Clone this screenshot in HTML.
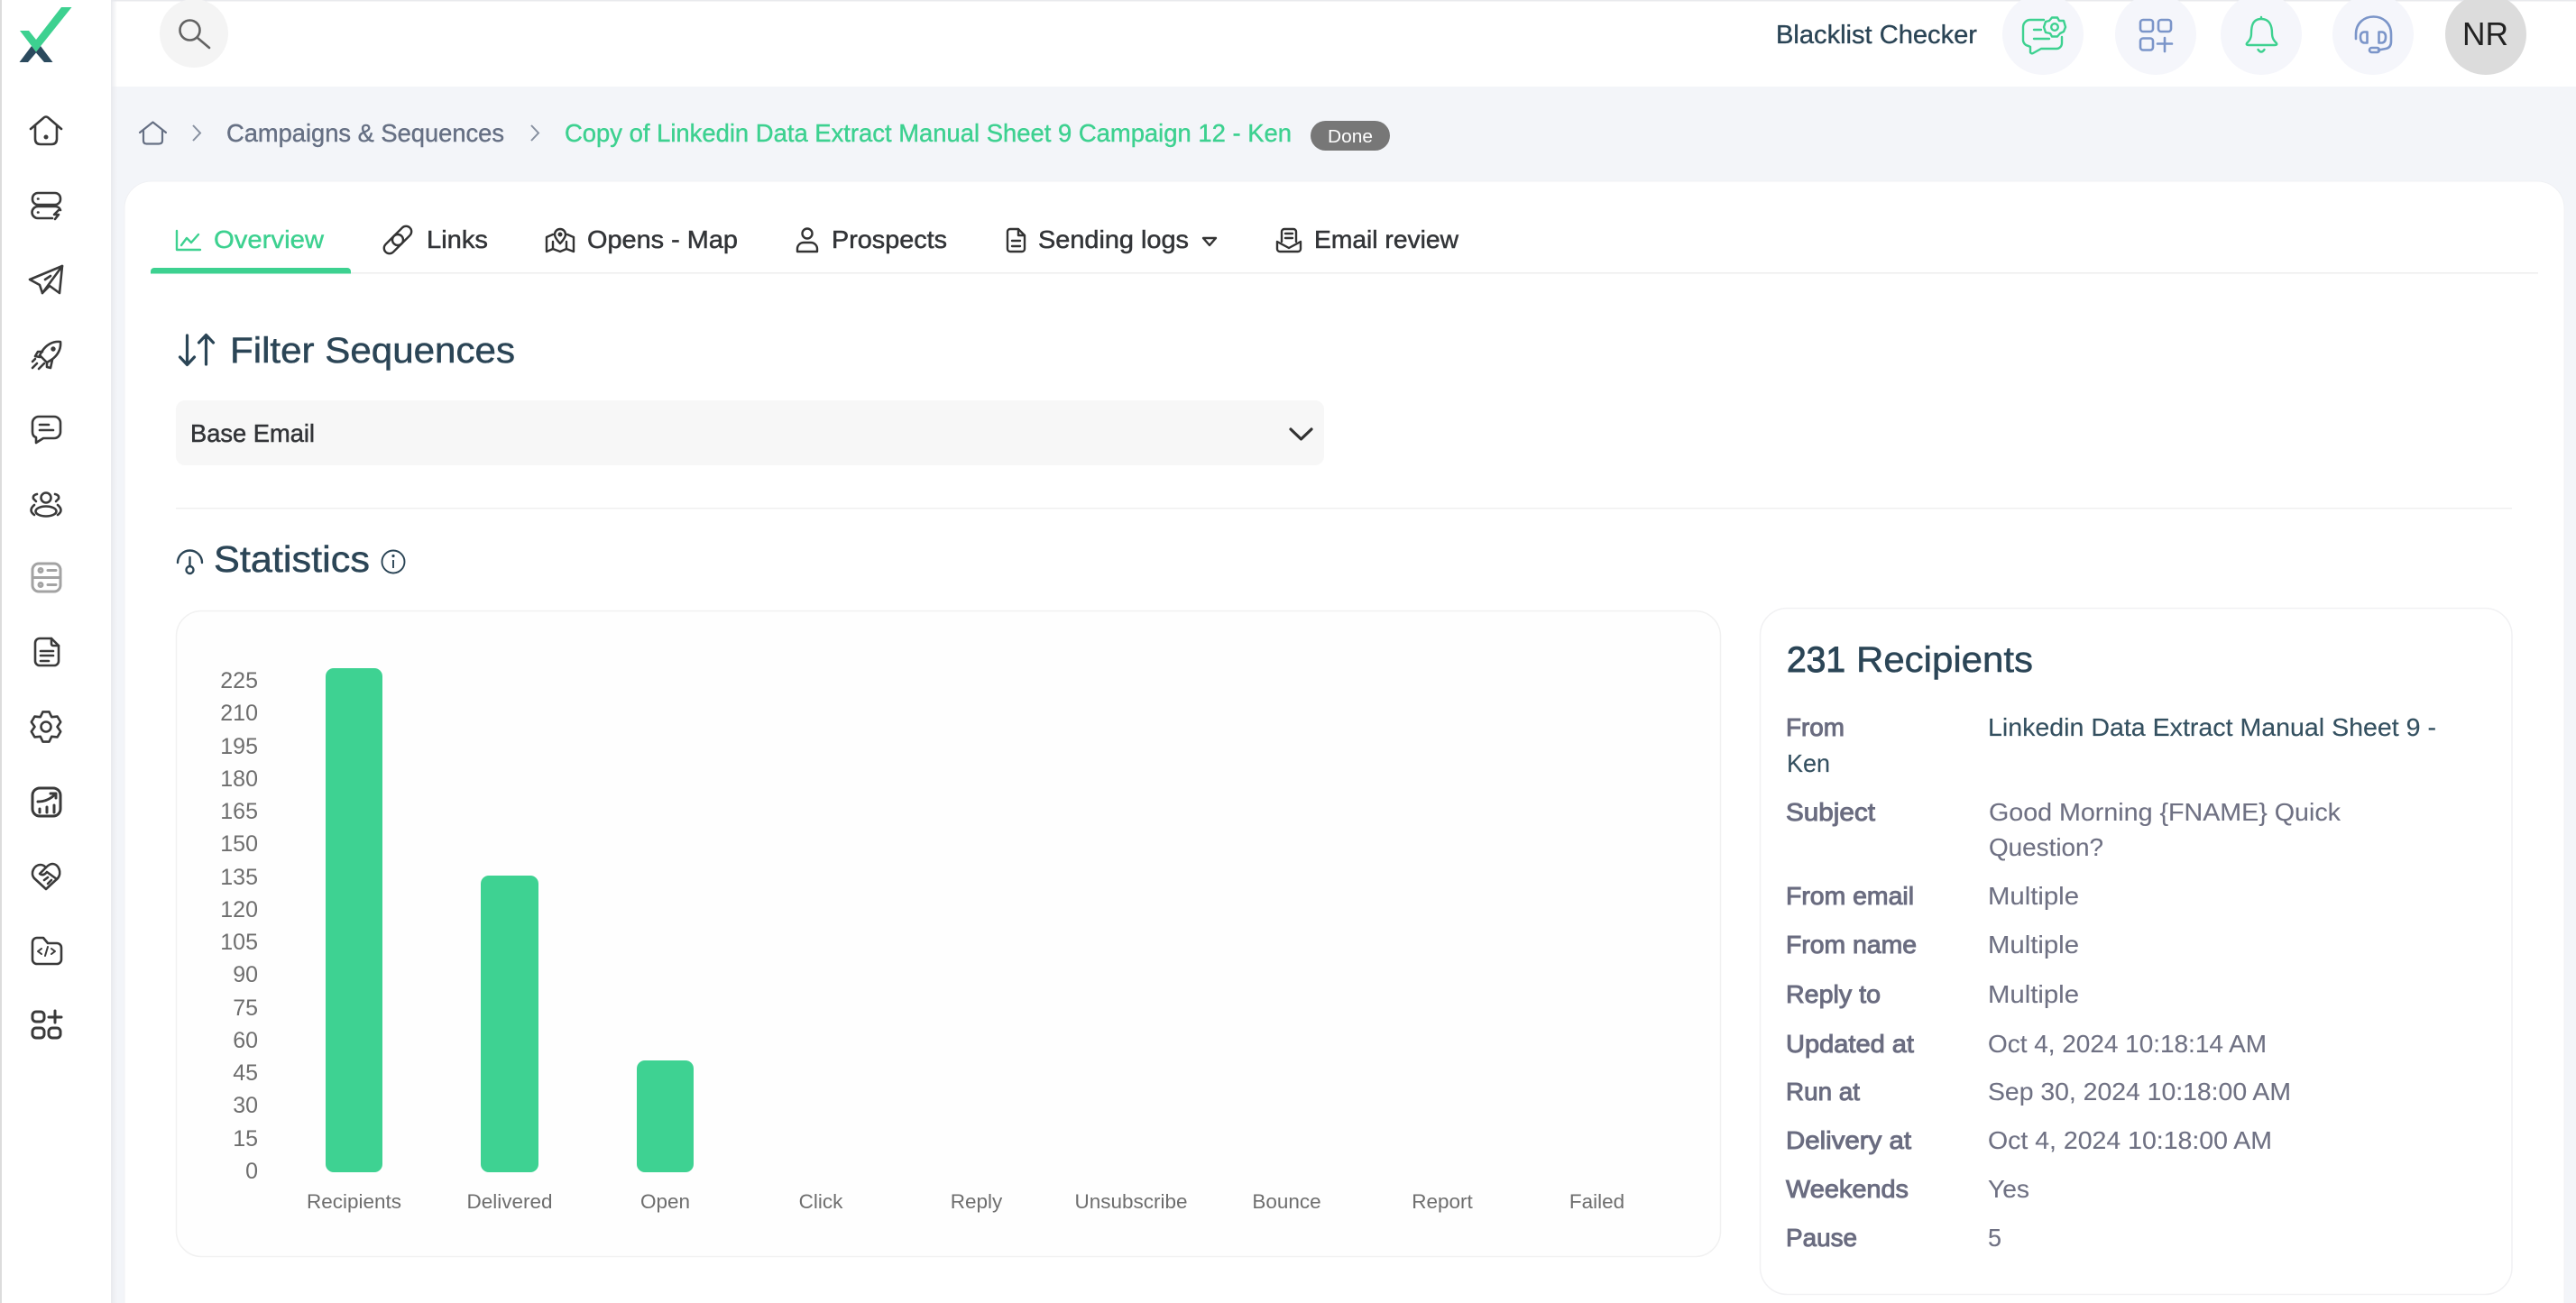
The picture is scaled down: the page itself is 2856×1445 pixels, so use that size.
<!DOCTYPE html>
<html lang="en">
<head>
<meta charset="utf-8">
<title>Campaign Overview</title>
<style>
html,body{margin:0;padding:0;width:2856px;height:1445px;overflow:hidden;background:#f3f5f9}
svg{display:block}
text{font-family:"Liberation Sans",Arial,sans-serif}
.t{font-size:27.5px;fill:#333538;stroke:#333538;stroke-width:.5px}
.crumb{font-size:27.5px;fill:#667084;stroke:#667084;stroke-width:.4px}
.lab{font-size:27.5px;fill:#6a6c80;stroke:#6a6c80;stroke-width:.95px}
.val{font-size:27.5px;fill:#6f7183;stroke:#6f7183;stroke-width:.12px}
.dark{font-size:27.5px;fill:#345060;stroke:#345060;stroke-width:.15px}
.h{font-size:39.5px;fill:#2b4556;stroke:#2b4556;stroke-width:.5px}
.y{font-size:25px;fill:#6e6e6e;text-anchor:end}
.x{font-size:22.5px;fill:#6e6e6e;text-anchor:middle}
.ic{fill:none;stroke:#3a3a3a;stroke-width:2.6;stroke-linecap:round;stroke-linejoin:round}
.tab{fill:none;stroke:#333;stroke-width:2.4;stroke-linecap:round;stroke-linejoin:round}
.g{fill:none;stroke:#3dd190;stroke-width:2.4;stroke-linecap:round;stroke-linejoin:round}
.b{fill:none;stroke:#7b95c9;stroke-width:2.6;stroke-linecap:round;stroke-linejoin:round}
</style>
</head>
<body>
<svg width="2856" height="1445" viewBox="0 0 2856 1445" xmlns="http://www.w3.org/2000/svg">
<defs>
<linearGradient id="sh" x1="0" x2="1" y1="0" y2="0"><stop offset="0" stop-color="#e9eaee"/><stop offset="1" stop-color="#e9eaee" stop-opacity="0"/></linearGradient>
</defs>
<rect width="2856" height="1445" fill="#f3f5f9"/>
<!-- header -->
<rect x="122" y="0" width="2734" height="96" fill="#fff"/>
<rect x="0" y="0" width="2856" height="1.5" fill="#e8e9ed"/>
<!-- sidebar -->
<rect x="0" y="0" width="123" height="1445" fill="#fff"/>
<rect x="0" y="0" width="2" height="1445" fill="#dcdcdc"/>
<rect x="123" y="0" width="7" height="1445" fill="url(#sh)"/>
<!-- logo -->
<polygon points="21.5,69 35,51 40,57.5 45,51 58.5,69 49,69 40,58.5 31,69" fill="#2b4a5e"/>
<polygon points="22,34 32,34 40,44 68,8 79.5,8 40,57.5" fill="#3dd190"/>
<!-- sidebar icons -->
<g class="ic">
<path d="M34 143 L48 131 Q51 128 54 131 L68 143"/><path d="M39 140 V154 Q39 160 45 160 H57 Q63 160 63 154 V140"/><circle cx="51" cy="152" r="1.2"/>
<rect x="36" y="214" width="31" height="13" rx="6"/><path d="M58 242 H42 a6.500 6.500 0 0 1 0-13 H61 a6 6 0 0 1 6 4"/><path d="M65 233 L60 238 H65 L61 243"/><path d="M42 220.500 h.5 M42 235.500 h.5"/>
<path d="M69 295 L33 310 L44 316 L47 325 L55 317 L66 325 Z"/><path d="M69 295 L47 325 M56 306 L50 310"/>
<path d="M67 379 C58 378 51 383 47 389 L44 394 L52 402 L57 399 C63 395 68 388 67 379Z"/><path d="M47 390 H42 L39 395 L44 396 M52 402 V407 L56 408 L58 399"/><path d="M36 408 L41 403 M43 409 L49 403 M39 398 L36 401"/><circle cx="59" cy="387" r="1.400"/>
<path d="M43 462 H60 a7 7 0 0 1 7 7 V479 a7 7 0 0 1 -7 7 H48 L40 491 V485 Q36 484 36 479 V469 a7 7 0 0 1 7 -7Z"/><path d="M44 471 H54 M44 477 H59"/>
<circle cx="51" cy="552" r="5.500"/><ellipse cx="51" cy="567" rx="11.500" ry="5.500"/><path d="M41 548 Q36 549 37 553 L40 556 M61 548 Q66 549 65 553 L62 556 M38 560 Q31 566 38 571 M64 560 Q71 566 64 571"/>
<g style="stroke:#a3a3a3;stroke-width:3"><rect x="36" y="625" width="31" height="31" rx="7"/><path d="M36 640.500 H67 M53 632.500 H62 M53 648.500 H62"/><circle cx="45" cy="632.500" r="2"/><circle cx="45" cy="648.500" r="2"/></g>
<path d="M44 708 H57 L65 716 V733 a5 5 0 0 1 -5 5 H44 a5 5 0 0 1 -5 -5 V713 a5 5 0 0 1 5 -5Z"/><path d="M57 708 v6 a2 2 0 0 0 2 2 h6 M45 722 H59 M45 727 H59 M45 733 H54"/>
<polygon points="47.500,789.400 54.500,789.400 57.250,795.200 63.600,794.600 67.200,800.700 63.500,806 67.200,811.300 63.600,817.400 57.250,816.800 54.500,822.600 47.500,822.600 44.750,816.800 38.400,817.400 34.800,811.300 38.500,806 34.800,800.700 38.400,794.600 44.750,795.200"/><circle cx="51" cy="806" r="5.500"/>
<g style="stroke-width:3"><rect x="36" y="874" width="31" height="31" rx="8"/><path d="M44 901 v-4 M52 901 v-6 M60 901 v-8 M42 889 C48 889 55 887 61 881 M56 880 h6 v5"/></g>
<path d="M51 986 L38 974 C33 968 38 959 45 959 C48 959 50 961 51 962 C52 961 55 958 58 958 C65 958 69 968 64 974 Z"/><path d="M51 962 L44 969 Q48 972 52 967 L63 975 M49 976 l4-3 M53 980 l4-4"/>
<path d="M36 1045 a5 5 0 0 1 5-5 h7 l5 6 h10 a5 5 0 0 1 5 5 v13 a5 5 0 0 1 -5 5 h-22 a5 5 0 0 1 -5 -5z"/><path d="M46 1052 l-4 3 4 3 M57 1052 l4 3 -4 3 M53 1050 l-3 10" style="stroke-width:2"/>
<g style="stroke-width:3"><rect x="36" y="1122" width="13" height="11" rx="4"/><rect x="36" y="1140" width="13" height="11" rx="4"/><rect x="54" y="1140" width="13" height="11" rx="4"/><path d="M54 1128 H68 M61 1121 V1134"/></g>
</g>
<!-- search -->
<circle cx="215" cy="37" r="38" fill="#f4f4f4"/>
<g fill="none" stroke="#636363" stroke-width="2.600" stroke-linecap="round"><circle cx="210.500" cy="33.500" r="11"/><path d="M219 42 L232 53"/></g>
<!-- top right -->
<text x="1969" y="48" class="h" style="font-size:28.500px;stroke-width:.35px" textLength="223" lengthAdjust="spacingAndGlyphs">Blacklist Checker</text>
<circle cx="2265" cy="38" r="45" fill="#f5f6fb"/><circle cx="2390" cy="38" r="45" fill="#f5f6fb"/><circle cx="2507" cy="38" r="45" fill="#f5f6fb"/><circle cx="2631" cy="38" r="45" fill="#f5f6fb"/><circle cx="2756" cy="38" r="45" fill="#dcdcdc"/>
<text x="2730" y="50" style="font-size:36px;fill:#222" textLength="51" lengthAdjust="spacingAndGlyphs">NR</text>
<g class="g">
<path d="M2266 22 H2251 a8 8 0 0 0 -8 8 V45 a7 7 0 0 0 6 6 L2251 52 V58 a2 2 0 0 0 3 1 L2263 54 H2280 a6 6 0 0 0 6-6 V41"/><path d="M2255 33 H2263 M2255 43 H2272"/>
<polygon points="2275,19.500 2281,19.500 2283,23 2288,23 2290,30 2288,35 2284,37 2281,40.500 2275,40.500 2273,37 2268,36 2266,30 2268,24 2272,23"/><circle cx="2278" cy="30" r="3.800"/>
<path d="M2507 19 V21 M2507 21 C2497 21 2496 30 2496 37 C2496 43 2493 46 2491 48 Q2490 50 2493 50 H2522 Q2525 50 2524 48 C2522 46 2519 43 2519 37 C2519 30 2517 21 2507 21Z"/><path d="M2503.500 55 Q2507 60 2510.500 55"/>
</g>
<g class="b">
<rect x="2373" y="22" width="14" height="13" rx="3"/><rect x="2393" y="22" width="14" height="13" rx="3"/><rect x="2373" y="42.500" width="14" height="13" rx="3"/><path d="M2392 48.500 H2408 M2400 42 V57"/>
<path d="M2612 43 V38 C2612 12 2651 12 2651 38 V46 Q2651 53 2645 54 L2637 55.500"/><path d="M2621 35.500 Q2617 36 2617 41 Q2617 47 2621 47.500 H2624.500 V35.500Z M2641 35.500 Q2645 36 2645 41 Q2645 47 2641 47.500 H2637.500 V35.500Z"/><rect x="2627" y="53" width="11" height="5" rx="2.500"/>
</g>
<!-- breadcrumb -->
<g fill="none" stroke="#667084" stroke-width="2.200" stroke-linecap="round" stroke-linejoin="round"><path d="M155 147 L169.500 135.500 L184 147"/><path d="M159 144 V156 Q159 159.500 162.500 159.500 H176 Q180 159.500 180 156 V144"/></g>
<path d="M214 139 L222 147.500 L214 156 M589 139 L597 147.500 L589 156" fill="none" stroke="#8790a0" stroke-width="2"/>
<text x="251" y="157" class="crumb" textLength="308" lengthAdjust="spacingAndGlyphs">Campaigns &amp; Sequences</text>
<text x="626" y="157" class="crumb" style="fill:#3dd190;stroke:#3dd190" textLength="806" lengthAdjust="spacingAndGlyphs">Copy of Linkedin Data Extract Manual Sheet 9 Campaign 12 - Ken</text>
<rect x="1453" y="134" width="88" height="33" rx="16.500" fill="#777"/>
<text x="1472" y="158" style="font-size:20px;fill:#fff" textLength="50" lengthAdjust="spacingAndGlyphs">Done</text>
<!-- main card -->
<rect x="138" y="201" width="2705" height="1300" rx="30" fill="#fff" stroke="#f0f1f4" stroke-width="1"/>
<!-- tabs -->
<rect x="167" y="302" width="2647" height="1.500" fill="#eeeeee"/>
<path d="M167 303.500 V301 a4 4 0 0 1 4-4 H385 a4 4 0 0 1 4 4 V303.500 Z" fill="#3dd190"/>
<path d="M196 256 V277 H222 M201 272 L207 264 L212 269 L220 260" class="g"/>
<text x="237" y="275" class="crumb" style="fill:#3dd190;stroke:#3dd190" textLength="122" lengthAdjust="spacingAndGlyphs">Overview</text>
<g class="tab">
<g transform="rotate(-45 441 266)"><rect x="422" y="260" width="25" height="12" rx="6"/><rect x="435" y="260" width="25" height="12" rx="6"/></g>
<path d="M613 260 L606 263 V279 L613 276 L621 279 L628 276 L636 279 V263 L629 260 M613 268 V276 M628 268 V276"/><path d="M621 254 a6 6 0 0 1 6 6 c0 4 -6 10 -6 10 s-6-6 -6-10 a6 6 0 0 1 6-6z"/><circle cx="621" cy="260" r="1.300"/>
<circle cx="895" cy="259" r="5.500"/><path d="M884 279 v-3 a7 7 0 0 1 7-7 h8 a7 7 0 0 1 7 7 v3z"/>
<path d="M1120 254 h9 l7 7 v15 a3 3 0 0 1 -3 3 h-13 a3 3 0 0 1-3-3 v-19 a3 3 0 0 1 3-3z M1122 267 h9 M1122 273 h9 M1129 254 v7 h7"/>
<path d="M1334 264 H1348 L1341 272Z"/>
<path d="M1421 268 V257 a3 3 0 0 1 3-3 h10 a3 3 0 0 1 3 3 v11 M1425 259 h8 M1425 264 h8 M1416 268 V276 a3 3 0 0 0 3 3 h20 a3 3 0 0 0 3 -3 V268 L1429 275 Z"/>
</g>
<text x="473" y="275" class="t" textLength="68" lengthAdjust="spacingAndGlyphs">Links</text>
<text x="651" y="275" class="t" textLength="167" lengthAdjust="spacingAndGlyphs">Opens - Map</text>
<text x="922" y="275" class="t" textLength="128" lengthAdjust="spacingAndGlyphs">Prospects</text>
<text x="1151" y="275" class="t" textLength="167" lengthAdjust="spacingAndGlyphs">Sending logs</text>
<text x="1457" y="275" class="t" textLength="160" lengthAdjust="spacingAndGlyphs">Email review</text>
<!-- filter -->
<path d="M207.500 372 V404 M199.500 396 L207.500 404.500 L215.500 396 M228.500 404 V372 M220.500 380 L228.500 371.500 L236.500 380" fill="none" stroke="#2b4556" stroke-width="3.200" stroke-linecap="round" stroke-linejoin="round"/>
<text x="255" y="402" class="h" textLength="316" lengthAdjust="spacingAndGlyphs">Filter Sequences</text>
<rect x="195" y="444" width="1273" height="72" rx="10" fill="#f7f7f7"/>
<text x="211" y="490" class="t" textLength="138" lengthAdjust="spacingAndGlyphs">Base Email</text>
<path d="M1431 476 L1442.500 487 L1454 476" fill="none" stroke="#333" stroke-width="3.200" stroke-linecap="round" stroke-linejoin="round"/>
<rect x="195" y="563" width="2590" height="1.500" fill="#f0f0f0"/>
<!-- statistics -->
<g fill="none" stroke="#2b4556" stroke-width="2.400" stroke-linecap="round"><path d="M197 624 a13.500 13.500 0 0 1 27 0 M210.500 618 V627"/><circle cx="210.500" cy="632" r="4"/></g>
<text x="237" y="634" class="h" style="font-size:40.500px" textLength="173" lengthAdjust="spacingAndGlyphs">Statistics</text>
<g fill="none" stroke="#2b4556" stroke-width="1.900"><circle cx="436" cy="623" r="12.500"/><path d="M436 621 V630"/></g><circle cx="436" cy="616.500" r="1.600" fill="#2b4556"/>
<!-- chart card -->
<rect x="195.500" y="677.500" width="1712" height="716" rx="28" fill="#fefefe" stroke="#f1f1f1" stroke-width="1.500"/>
<rect x="361" y="741" width="63" height="559" rx="9" fill="#3ed292"/>
<rect x="533" y="971" width="64" height="329" rx="9" fill="#3ed292"/>
<rect x="706" y="1176" width="63" height="124" rx="9" fill="#3ed292"/>
<g class="y" transform="translate(0,-1)">
<text x="286" y="764">225</text><text x="286" y="800">210</text><text x="286" y="837">195</text><text x="286" y="873">180</text><text x="286" y="909">165</text><text x="286" y="945">150</text><text x="286" y="982">135</text><text x="286" y="1018">120</text><text x="286" y="1054">105</text><text x="286" y="1090">90</text><text x="286" y="1127">75</text><text x="286" y="1163">60</text><text x="286" y="1199">45</text><text x="286" y="1235">30</text><text x="286" y="1272">15</text><text x="286" y="1308">0</text>
</g>
<g class="x">
<text x="392.500" y="1340">Recipients</text><text x="565" y="1340">Delivered</text><text x="737.500" y="1340">Open</text><text x="910" y="1340">Click</text><text x="1082.500" y="1340">Reply</text><text x="1254" y="1340">Unsubscribe</text><text x="1426.500" y="1340">Bounce</text><text x="1599" y="1340">Report</text><text x="1770.500" y="1340">Failed</text>
</g>
<!-- info card -->
<rect x="1951.500" y="674.500" width="833.500" height="761" rx="30" fill="#fff" stroke="#f1f1f3" stroke-width="1.500"/>
<g transform="translate(0,-1)">
<text x="1981" y="746" class="h" style="stroke-width:1px" textLength="65" lengthAdjust="spacingAndGlyphs">231</text>
<text x="2058" y="746" class="h" textLength="196" lengthAdjust="spacingAndGlyphs">Recipients</text>
<text x="1980" y="817" class="lab" textLength="65" lengthAdjust="spacingAndGlyphs">From</text>
<text x="2204" y="817" class="dark" textLength="497" lengthAdjust="spacingAndGlyphs">Linkedin Data Extract Manual Sheet 9 -</text>
<text x="1981" y="857" class="dark" textLength="48" lengthAdjust="spacingAndGlyphs">Ken</text>
<text x="1980" y="911" class="lab" textLength="99" lengthAdjust="spacingAndGlyphs">Subject</text>
<text x="2205" y="911" class="val" textLength="390" lengthAdjust="spacingAndGlyphs">Good Morning {FNAME} Quick</text>
<text x="2205" y="950" class="val" textLength="127" lengthAdjust="spacingAndGlyphs">Question?</text>
<text x="1980" y="1004" class="lab" textLength="142" lengthAdjust="spacingAndGlyphs">From email</text>
<text x="2204" y="1004" class="val" textLength="101" lengthAdjust="spacingAndGlyphs">Multiple</text>
<text x="1980" y="1058" class="lab" textLength="145" lengthAdjust="spacingAndGlyphs">From name</text>
<text x="2204" y="1058" class="val" textLength="101" lengthAdjust="spacingAndGlyphs">Multiple</text>
<text x="1980" y="1113" class="lab" textLength="105" lengthAdjust="spacingAndGlyphs">Reply to</text>
<text x="2204" y="1113" class="val" textLength="101" lengthAdjust="spacingAndGlyphs">Multiple</text>
<text x="1980" y="1168" class="lab" textLength="142" lengthAdjust="spacingAndGlyphs">Updated at</text>
<text x="2204" y="1168" class="val" textLength="309" lengthAdjust="spacingAndGlyphs">Oct 4, 2024 10:18:14 AM</text>
<text x="1980" y="1221" class="lab" textLength="82" lengthAdjust="spacingAndGlyphs">Run at</text>
<text x="2204" y="1221" class="val" textLength="336" lengthAdjust="spacingAndGlyphs">Sep 30, 2024 10:18:00 AM</text>
<text x="1980" y="1275" class="lab" textLength="139" lengthAdjust="spacingAndGlyphs">Delivery at</text>
<text x="2204" y="1275" class="val" textLength="315" lengthAdjust="spacingAndGlyphs">Oct 4, 2024 10:18:00 AM</text>
<text x="1980" y="1329" class="lab" textLength="136" lengthAdjust="spacingAndGlyphs">Weekends</text>
<text x="2204" y="1329" class="val" textLength="46" lengthAdjust="spacingAndGlyphs">Yes</text>
<text x="1980" y="1383" class="lab" textLength="79" lengthAdjust="spacingAndGlyphs">Pause</text>
<text x="2204" y="1383" class="val" textLength="15" lengthAdjust="spacingAndGlyphs">5</text>
</g>
</svg>
</body>
</html>
